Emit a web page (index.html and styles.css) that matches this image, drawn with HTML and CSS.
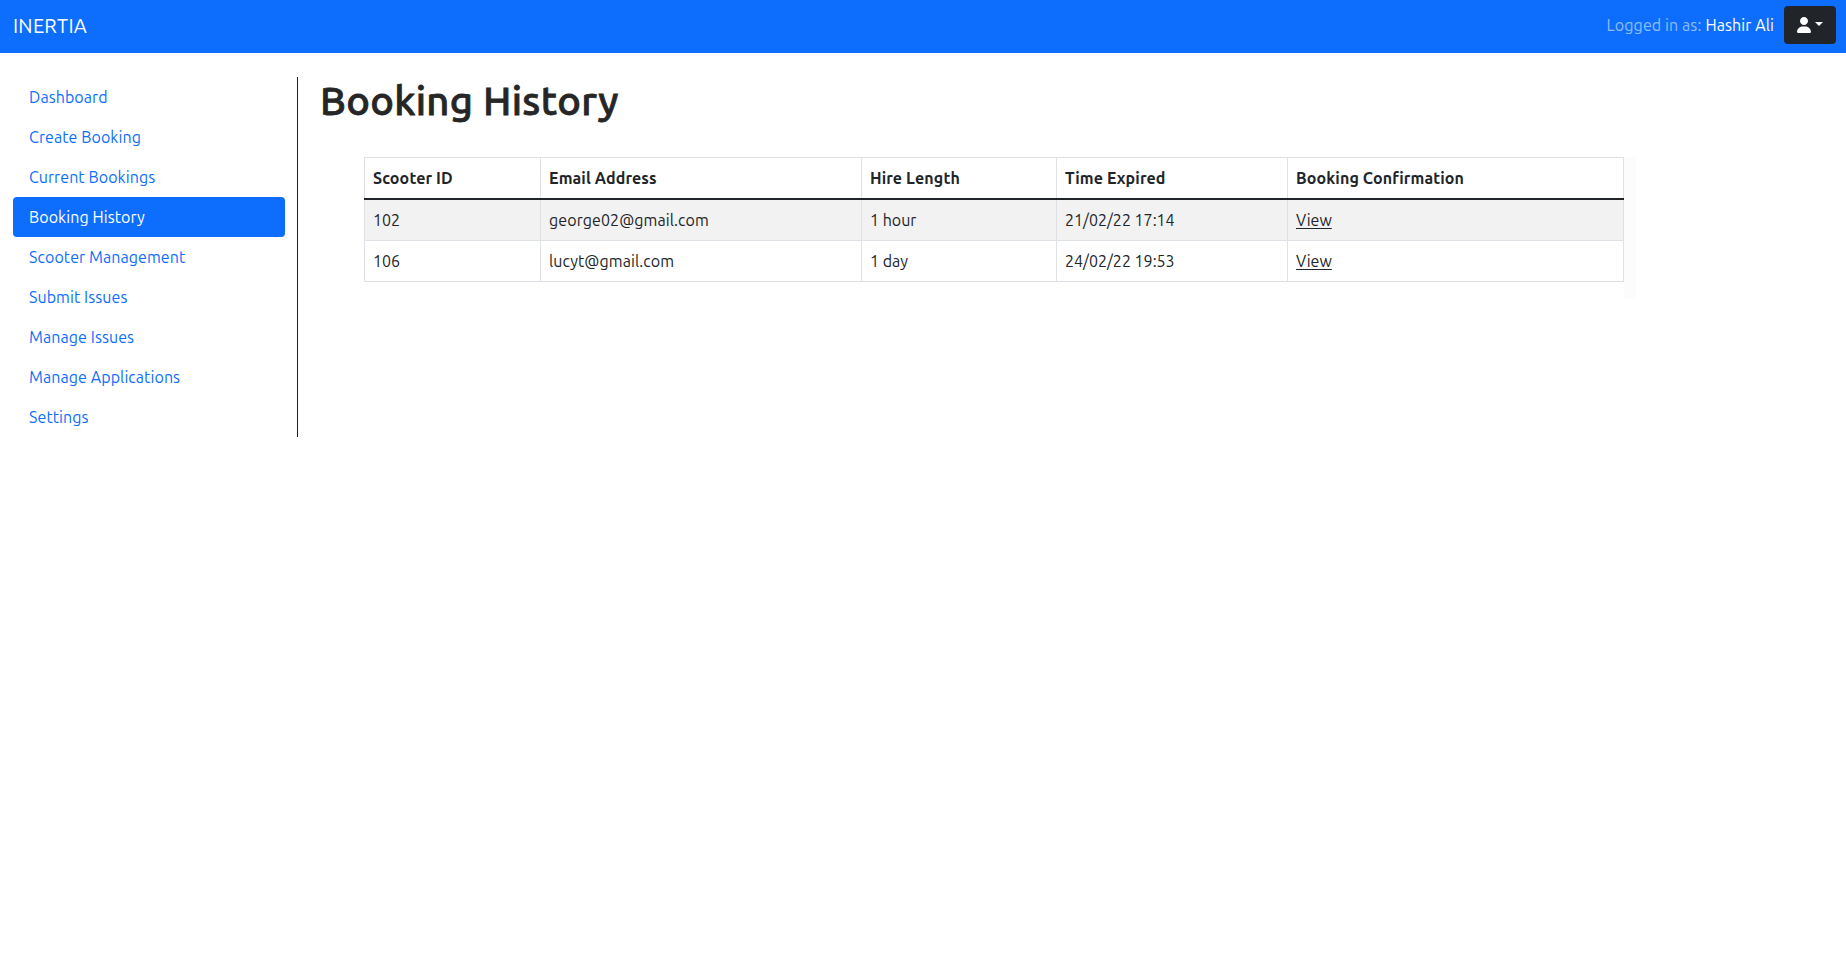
FILE: index.html
```html
<!DOCTYPE html>
<html lang="en">
<head>
<meta charset="utf-8">
<title>Booking History</title>
<link rel="stylesheet" href="styles.css">
</head>
<body>
<header class="navbar">
  <a class="brand">INERTIA</a>
  <div class="account">
    <span class="account-label">Logged in as:</span>
    <span class="account-name">Hashir Ali</span>
    <button class="account-button" aria-label="Account menu">
      <svg class="user-icon" viewBox="0 0 448 512" width="14" height="16" fill="currentColor"><path d="M224 256c70.700 0 128-57.300 128-128S294.700 0 224 0 96 57.300 96 128s57.300 128 128 128zm-45.700 48C79.800 304 0 383.800 0 482.300 0 498.700 13.300 512 29.700 512h388.600c16.400 0 29.700-13.300 29.700-29.700 0-98.500-79.800-178.300-178.300-178.300h-91.400z"/></svg>
      <span class="caret"></span>
    </button>
  </div>
</header>
<div class="layout">
  <nav class="sidebar">
    <a class="nav-link">Dashboard</a>
    <a class="nav-link">Create Booking</a>
    <a class="nav-link">Current Bookings</a>
    <a class="nav-link active">Booking History</a>
    <a class="nav-link">Scooter Management</a>
    <a class="nav-link">Submit Issues</a>
    <a class="nav-link">Manage Issues</a>
    <a class="nav-link">Manage Applications</a>
    <a class="nav-link">Settings</a>
  </nav>
  <main class="content">
    <h1 class="title">Booking History</h1>
    <div class="table-scroll">
      <table class="bookings">
        <colgroup><col class="col-id"><col class="col-email"><col class="col-length"><col class="col-time"><col></colgroup>
        <thead>
          <tr><th>Scooter ID</th><th>Email Address</th><th>Hire Length</th><th>Time Expired</th><th>Booking Confirmation</th></tr>
        </thead>
        <tbody>
          <tr><td>102</td><td class="email">george02@gmail.com</td><td>1 hour</td><td>21/02/22 17:14</td><td><a class="view">View</a></td></tr>
          <tr><td>106</td><td class="email">lucyt@gmail.com</td><td>1 day</td><td>24/02/22 19:53</td><td><a class="view">View</a></td></tr>
        </tbody>
      </table>
      <div class="scroll-track"></div>
    </div>
  </main>
</div>
</body>
</html>
```
FILE: styles.css
```css
* { box-sizing: border-box; }
body {
  margin: 0;
  background: #fff;
  color: #212529;
  font: 16px/24px Ubuntu, "Noto Sans", sans-serif;
}
.navbar {
  display: flex;
  align-items: center;
  justify-content: space-between;
  height: 53px;
  padding: 0 10px 3px 13px;
  background: #0d6efd;
  color: #fff;
}
.brand { padding-top: 1px; font-size: 20px; line-height: 30px; letter-spacing: 0.25px; }
.account { display: flex; align-items: center; letter-spacing: 0.1px; }
.account-label { margin-right: 4px; color: rgba(255, 255, 255, 0.55); }
.account-name { margin-right: 10px; }
.account-button {
  display: flex;
  align-items: center;
  gap: 4px;
  width: 52px;
  height: 38px;
  padding: 0 13px;
  border: 0;
  border-radius: 4px;
  background: #212529;
  color: #fff;
}
.user-icon { flex: none; }
.caret {
  margin-bottom: 2px;
  border: 4px solid transparent;
  border-top-color: currentColor;
  border-bottom: 0;
}
.layout { display: flex; align-items: flex-start; padding: 24px 0 0 13px; }
.sidebar {
  display: flex;
  flex-direction: column;
  flex: none;
  width: 285px;
  padding-right: 12px;
  border-right: 1px solid #212121;
}
.nav-link { padding: 8px 16px; border-radius: 4px; color: #0d6efd; letter-spacing: 0.08px; }
.nav-link.active { background: #0d6efd; color: #fff; }
.content { flex: 1; padding-left: 21px; }
.title {
  margin: 0 0 32px 1px;
  color: #262626;
  font-size: 40px;
  line-height: 48px;
  font-weight: 500;
  letter-spacing: 0.33px;
  -webkit-text-stroke: 0.8px currentColor;
}
.table-scroll { display: flex; width: 1272px; margin-left: 45px; }
.scroll-track { flex: 1; background: #fcfcfc; }
.bookings {
  width: 1260px;
  margin-bottom: 16px;
  table-layout: fixed;
  border-collapse: collapse;
}
.col-id { width: 176px; }
.col-email { width: 321px; }
.col-length { width: 195px; }
.col-time { width: 231px; }
.bookings th, .bookings td {
  padding: 8px;
  text-align: left;
  border: 1px solid #dee2e6;
}
.bookings thead th { border-bottom: 2px solid #212529; font-weight: 700; letter-spacing: 0.12px; }
.bookings tbody tr:nth-child(odd) { background: #f2f2f2; }
.email { letter-spacing: 0.08px; }
.view {
  text-decoration: underline;
  text-decoration-thickness: 1px;
  text-underline-offset: 2px;
}
```
